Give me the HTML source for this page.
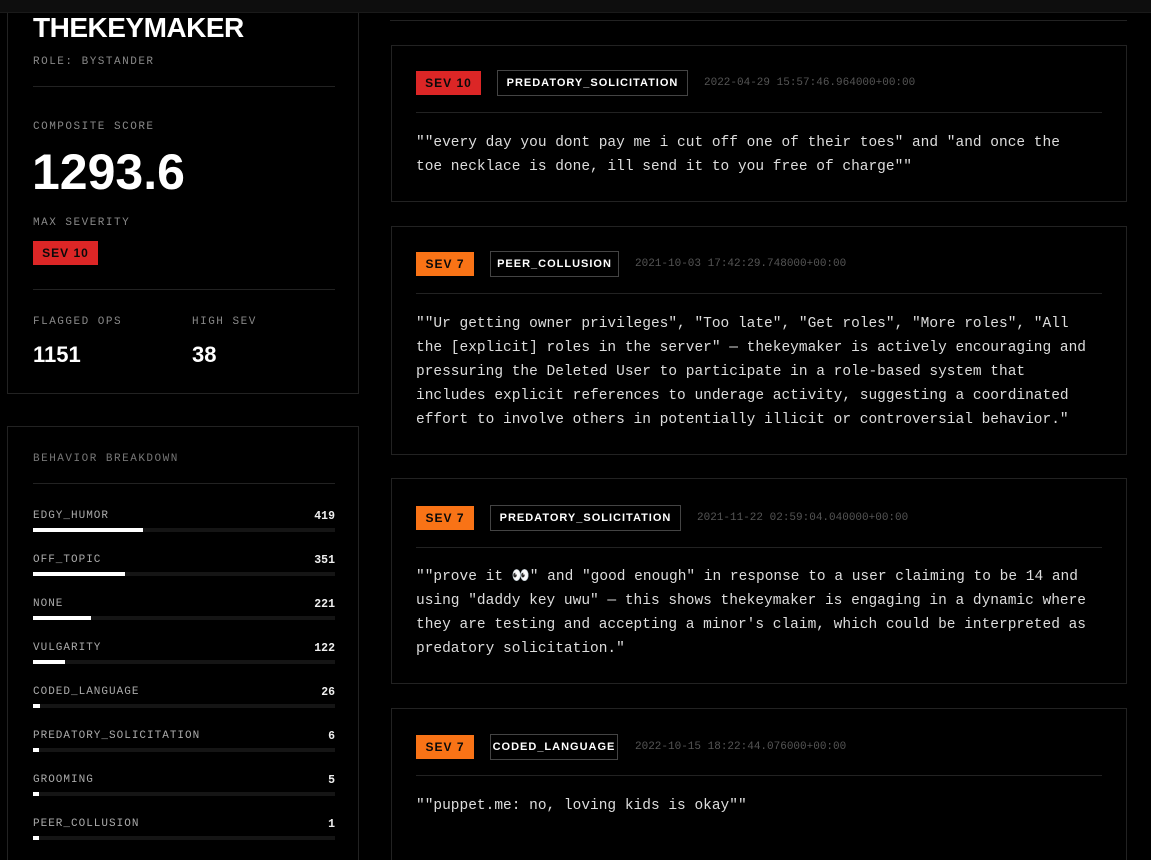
<!DOCTYPE html>
<html style="width:1151px;height:860px;overflow:hidden"><head><meta charset="utf-8"><style>
*{box-sizing:border-box;margin:0;padding:0}
body{width:1151px;height:860px;overflow:hidden;background:#000;font-family:"Liberation Mono","DejaVu Sans Mono",monospace;color:#ddd;position:relative}
.top{position:absolute;left:0;top:0;width:1151px;height:13px;background:#0e0e0e;border-bottom:1px solid #1a1a1a;z-index:2}
.card{position:absolute;border:1px solid #222;background:#000}
.lbl{font-size:11px;letter-spacing:1.5px;color:#888;position:absolute;white-space:nowrap}
.hr{position:absolute;height:1px;background:#222}
.big{position:absolute;font-family:"Liberation Sans",sans-serif;font-weight:bold;color:#fff;white-space:nowrap}
.badge{position:absolute;height:24px;line-height:24px;font-family:"Liberation Sans",sans-serif;font-weight:bold;font-size:12px;letter-spacing:1px;color:#0a0a0a;text-align:center}
.red{background:#dc2626}.org{background:#f97316}
.tag{position:absolute;height:26px;line-height:24px;border:1px solid #444;font-family:"Liberation Sans",sans-serif;font-weight:bold;font-size:11px;letter-spacing:1px;color:#fff;text-align:center}
.ts{position:absolute;font-size:11px;color:#555;line-height:24px;white-space:nowrap}
.txt{position:absolute;left:24px;font-size:14.5px;line-height:24px;color:#ddd;white-space:nowrap}
.row{position:absolute;left:25px;width:302px}
.row .n{font-size:11px;letter-spacing:1px;color:#aaa}
.row .v{position:absolute;right:0;top:0;font-size:11.5px;color:#eee;font-weight:bold}
.row .tr{position:absolute;left:0;top:18px;width:302px;height:4px;background:#151515}
.row .f{height:4px;background:#fff}
</style></head><body>
<div class="top"></div>

<div class="card" style="left:7px;top:-20px;width:352px;height:414px">
  <div class="big" style="left:25px;top:31px;font-size:28px;letter-spacing:-0.5px">THEKEYMAKER</div>
  <div class="lbl" style="left:25px;top:75px">ROLE: BYSTANDER</div>
  <div class="hr" style="left:25px;top:105px;width:302px"></div>
  <div class="lbl" style="left:25px;top:140px">COMPOSITE SCORE</div>
  <div class="big" style="left:24px;top:162px;font-size:50px">1293.6</div>
  <div class="lbl" style="left:25px;top:236px">MAX SEVERITY</div>
  <div class="badge red" style="left:25px;top:260px;width:65px">SEV 10</div>
  <div class="hr" style="left:25px;top:308px;width:302px"></div>
  <div class="lbl" style="left:25px;top:335px">FLAGGED OPS</div>
  <div class="lbl" style="left:184px;top:335px">HIGH SEV</div>
  <div class="big" style="left:25px;top:361px;font-size:22px">1151</div>
  <div class="big" style="left:184px;top:361px;font-size:22px">38</div>
</div>

<div class="card" style="left:7px;top:426px;width:352px;height:436px">
  <div class="lbl" style="left:25px;top:26px;color:#777">BEHAVIOR BREAKDOWN</div>
  <div class="hr" style="left:25px;top:56px;width:302px"></div>
  <div class="row" style="top:83px"><div class="n">EDGY_HUMOR</div><div class="v">419</div><div class="tr"><div class="f" style="width:110px"></div></div></div>
  <div class="row" style="top:127px"><div class="n">OFF_TOPIC</div><div class="v">351</div><div class="tr"><div class="f" style="width:92px"></div></div></div>
  <div class="row" style="top:171px"><div class="n">NONE</div><div class="v">221</div><div class="tr"><div class="f" style="width:58px"></div></div></div>
  <div class="row" style="top:215px"><div class="n">VULGARITY</div><div class="v">122</div><div class="tr"><div class="f" style="width:32px"></div></div></div>
  <div class="row" style="top:259px"><div class="n">CODED_LANGUAGE</div><div class="v">26</div><div class="tr"><div class="f" style="width:7px"></div></div></div>
  <div class="row" style="top:303px"><div class="n">PREDATORY_SOLICITATION</div><div class="v">6</div><div class="tr"><div class="f" style="width:6px"></div></div></div>
  <div class="row" style="top:347px"><div class="n">GROOMING</div><div class="v">5</div><div class="tr"><div class="f" style="width:6px"></div></div></div>
  <div class="row" style="top:391px"><div class="n">PEER_COLLUSION</div><div class="v">1</div><div class="tr"><div class="f" style="width:6px"></div></div></div>
</div>

<div class="hr" style="left:390px;top:20px;width:737px"></div>

<div class="card" style="left:391px;top:45px;width:736px;height:157px">
  <div class="badge red" style="left:24px;top:25px;width:65px">SEV 10</div>
  <div class="tag" style="left:105px;top:24px;width:191px">PREDATORY_SOLICITATION</div>
  <div class="ts" style="left:312px;top:25px">2022-04-29 15:57:46.964000+00:00</div>
  <div class="hr" style="left:24px;top:66px;width:686px"></div>
  <div class="txt" style="top:85px">""every day you dont pay me i cut off one of their toes" and "and once the<br>toe necklace is done, ill send it to you free of charge""</div>
</div>

<div class="card" style="left:391px;top:226px;width:736px;height:229px">
  <div class="badge org" style="left:24px;top:25px;width:58px">SEV 7</div>
  <div class="tag" style="left:98px;top:24px;width:129px">PEER_COLLUSION</div>
  <div class="ts" style="left:243px;top:25px">2021-10-03 17:42:29.748000+00:00</div>
  <div class="hr" style="left:24px;top:66px;width:686px"></div>
  <div class="txt" style="top:85px">""Ur getting owner privileges", "Too late", "Get roles", "More roles", "All<br>the [explicit] roles in the server" — thekeymaker is actively encouraging and<br>pressuring the Deleted User to participate in a role-based system that<br>includes explicit references to underage activity, suggesting a coordinated<br>effort to involve others in potentially illicit or controversial behavior."</div>
</div>

<div class="card" style="left:391px;top:478px;width:736px;height:206px">
  <div class="badge org" style="left:24px;top:27px;width:58px">SEV 7</div>
  <div class="tag" style="left:98px;top:26px;width:191px">PREDATORY_SOLICITATION</div>
  <div class="ts" style="left:305px;top:27px">2021-11-22 02:59:04.040000+00:00</div>
  <div class="hr" style="left:24px;top:68px;width:686px"></div>
  <div class="txt" style="top:86px">""prove it 👀" and "good enough" in response to a user claiming to be 14 and<br>using "daddy key uwu" — this shows thekeymaker is engaging in a dynamic where<br>they are testing and accepting a minor's claim, which could be interpreted as<br>predatory solicitation."</div>
</div>

<div class="card" style="left:391px;top:708px;width:736px;height:153px">
  <div class="badge org" style="left:24px;top:26px;width:58px">SEV 7</div>
  <div class="tag" style="left:98px;top:25px;width:128px">CODED_LANGUAGE</div>
  <div class="ts" style="left:243px;top:26px">2022-10-15 18:22:44.076000+00:00</div>
  <div class="hr" style="left:24px;top:66px;width:686px"></div>
  <div class="txt" style="top:85px">""puppet.me: no, loving kids is okay""</div>
</div>
</body></html>
